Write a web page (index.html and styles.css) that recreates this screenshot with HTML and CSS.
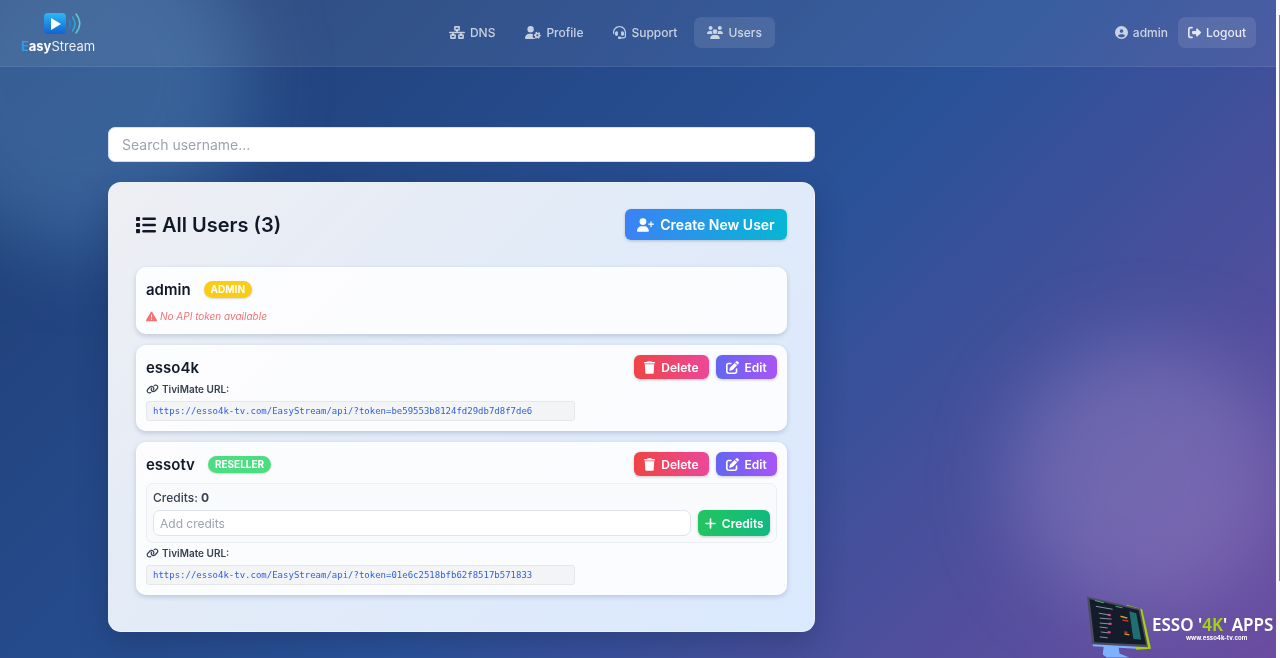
FILE: index.html
```html
<!DOCTYPE html>
<html lang="en">
<head>
    <meta charset="UTF-8">
    <meta name="viewport" content="width=device-width, initial-scale=1.0">
    <title>EasyStream - Users</title>
    <link rel="stylesheet" href="styles.css">
</head>
<body>
    <!-- icon set -->
    <svg class="sprite" aria-hidden="true">
        <symbol id="i-network" viewBox="0 0 640 512">
            <g fill="none" stroke="currentColor" stroke-width="64" stroke-linejoin="round" stroke-linecap="round">
                <rect x="236" y="32" width="168" height="124"/>
                <rect x="76" y="356" width="168" height="124"/>
                <rect x="396" y="356" width="168" height="124"/>
                <path d="M32 256H608M320 160v96M160 256v96M480 256v96"/>
            </g>
        </symbol>
        <symbol id="i-user-gear" viewBox="0 0 640 512">
            <path d="M224 0a128 128 0 1 1 0 256A128 128 0 1 1 224 0zM178.300 304h91.400c11.800 0 23.400 1.200 34.500 3.300-2.100 18.500 7.400 35.600 21.800 44.800-16.600 10.600-26.700 31.600-20 53.300 4 12.900 9.400 25.500 16.400 37.600s15.200 23.100 24.400 33c15.700 16.900 39.600 18.400 57.200 8.700v.9c0 9.200 2.700 18.500 7.900 26.300H29.700C13.300 512 0 498.700 0 482.300 0 383.800 79.800 304 178.300 304z"/>
            <circle cx="496" cy="368" r="74" fill="none" stroke="currentColor" stroke-width="64"/>
            <circle cx="496" cy="368" r="118" fill="none" stroke="currentColor" stroke-width="44" stroke-dasharray="62 61.570" stroke-dashoffset="31"/>
        </symbol>
        <symbol id="i-headset" viewBox="0 0 512 512">
            <path d="M256 48C141.100 48 48 141.100 48 256v40c0 13.300-10.700 24-24 24s-24-10.700-24-24V256C0 114.600 114.600 0 256 0S512 114.600 512 256V400.100c0 48.600-39.400 88-88.100 88L313.600 488c-8.300 14.300-23.800 24-41.600 24H240c-26.500 0-48-21.500-48-48s21.500-48 48-48h32c17.800 0 33.300 9.700 41.600 24l110.400 .1c22.100 0 40-17.900 40-40V256c0-114.900-93.100-208-208-208zM144 208h16c17.700 0 32 14.300 32 32V352c0 17.700-14.300 32-32 32H144c-35.300 0-64-28.700-64-64V272c0-35.300 28.700-64 64-64zm224 0c35.300 0 64 28.700 64 64v48c0 35.300-28.700 64-64 64H352c-17.700 0-32-14.300-32-32V240c0-17.700 14.300-32 32-32h16z"/>
        </symbol>
        <symbol id="i-users" viewBox="0 0 640 512">
            <path d="M144 0a80 80 0 1 1 0 160A80 80 0 1 1 144 0zM512 0a80 80 0 1 1 0 160A80 80 0 1 1 512 0zM0 298.700C0 239.800 47.800 192 106.700 192h42.700c15.900 0 31 3.500 44.600 9.700c-1.300 7.200-1.900 14.700-1.900 22.300c0 38.200 16.800 72.500 43.300 96c-.2 0-.4 0-.7 0H21.300C9.600 320 0 310.400 0 298.700zM405.300 320c-.2 0-.4 0-.7 0c26.600-23.500 43.300-57.800 43.300-96c0-7.600-.7-15-1.900-22.300c13.600-6.300 28.700-9.700 44.600-9.700h42.700C592.200 192 640 239.800 640 298.700c0 11.800-9.600 21.300-21.300 21.300H405.300zM224 224a96 96 0 1 1 192 0 96 96 0 1 1 -192 0zM128 485.300C128 411.700 187.700 352 261.300 352H378.700C452.300 352 512 411.700 512 485.300c0 14.700-11.900 26.700-26.700 26.700H154.700c-14.700 0-26.700-11.900-26.700-26.700z"/>
        </symbol>
        <symbol id="i-circle-user" viewBox="0 0 512 512">
            <path fill-rule="evenodd" d="M399 384.200C376.900 345.800 335.400 320 288 320H224c-47.400 0-88.900 25.800-111 64.200c35.200 39.200 86.200 63.800 143 63.800s107.800-24.700 143-63.800zM0 256a256 256 0 1 1 512 0A256 256 0 1 1 0 256zm256 16a72 72 0 1 0 0-144 72 72 0 1 0 0 144z"/>
        </symbol>
        <symbol id="i-logout" viewBox="0 0 512 512">
            <path d="M377.900 105.900L500.700 228.700c7.200 7.200 11.300 17.100 11.300 27.300s-4.100 20.100-11.300 27.300L377.900 406.100c-6.400 6.400-15 9.900-24 9.900c-18.700 0-33.900-15.200-33.900-33.900l0-62.100-128 0c-17.700 0-32-14.300-32-32l0-64c0-17.700 14.300-32 32-32l128 0 0-62.100c0-18.700 15.200-33.900 33.900-33.900c9 0 17.600 3.600 24 9.900zM160 96L96 96c-17.700 0-32 14.300-32 32l0 256c0 17.700 14.300 32 32 32l64 0c17.700 0 32 14.300 32 32s-14.300 32-32 32l-64 0c-53 0-96-43-96-96L0 128C0 75 43 32 96 32l64 0c17.700 0 32 14.300 32 32s-14.300 32-32 32z"/>
        </symbol>
        <symbol id="i-list" viewBox="0 0 512 512">
            <rect x="0" y="48" width="104" height="104" rx="24"/>
            <rect x="0" y="204" width="104" height="104" rx="24"/>
            <rect x="0" y="360" width="104" height="104" rx="24"/>
            <rect x="160" y="64" width="352" height="64" rx="32"/>
            <rect x="160" y="224" width="352" height="64" rx="32"/>
            <rect x="160" y="384" width="352" height="64" rx="32"/>
        </symbol>
        <symbol id="i-user-plus" viewBox="0 0 640 512">
            <path d="M96 128a128 128 0 1 1 256 0A128 128 0 1 1 96 128zM0 482.300C0 383.800 79.800 304 178.300 304h91.400C368.200 304 448 383.800 448 482.300c0 16.400-13.300 29.700-29.700 29.700H29.700C13.300 512 0 498.700 0 482.300zM504 312V248H440c-13.300 0-24-10.700-24-24s10.700-24 24-24h64V136c0-13.300 10.700-24 24-24s24 10.700 24 24v64h64c13.300 0 24 10.700 24 24s-10.700 24-24 24H552v64c0 13.300-10.700 24-24 24s-24-10.700-24-24z"/>
        </symbol>
        <symbol id="i-trash" viewBox="0 0 448 512">
            <path d="M135.200 17.700L128 32H32C14.300 32 0 46.300 0 64S14.300 96 32 96H416c17.700 0 32-14.300 32-32s-14.300-32-32-32H320l-7.200-14.300C307.400 6.800 296.300 0 284.200 0H163.800c-12.100 0-23.200 6.800-28.600 17.700zM416 128H32L53.200 467c1.600 25.300 22.600 45 47.900 45H346.900c25.300 0 46.300-19.700 47.900-45L416 128z"/>
        </symbol>
        <symbol id="i-edit" viewBox="0 0 512 512">
            <path d="M471.600 21.700c-21.900-21.900-57.300-21.900-79.200 0L362.300 51.700l97.900 97.900 30.100-30.100c21.900-21.900 21.900-57.300 0-79.200L471.600 21.700zm-299.200 220c-6.100 6.100-10.800 13.600-13.500 21.900l-29.600 88.800c-2.900 8.600-.6 18.100 5.800 24.600s15.900 8.700 24.600 5.800l88.800-29.600c8.200-2.700 15.700-7.400 21.900-13.500L437.700 172.300 339.700 74.300 172.400 241.700zM96 64C43 64 0 107 0 160V416c0 53 43 96 96 96H352c53 0 96-43 96-96V320c0-17.700-14.300-32-32-32s-32 14.300-32 32v96c0 17.700-14.300 32-32 32H96c-17.700 0-32-14.300-32-32V160c0-17.700 14.300-32 32-32h96c17.700 0 32-14.300 32-32s-14.300-32-32-32H96z"/>
        </symbol>
        <symbol id="i-warning" viewBox="0 0 512 512">
            <path d="M256 32c14.200 0 27.300 7.500 34.500 19.800l216 368c7.300 12.400 7.300 27.700 .2 40.100S486.300 480 472 480H40c-14.300 0-27.600-7.700-34.700-20.100s-7-27.800 .2-40.100l216-368C228.700 39.500 241.800 32 256 32zm0 128c-13.300 0-24 10.700-24 24V296c0 13.300 10.700 24 24 24s24-10.700 24-24V184c0-13.300-10.700-24-24-24zm32 224a32 32 0 1 0 -64 0 32 32 0 1 0 64 0z"/>
        </symbol>
        <symbol id="i-link" viewBox="0 0 640 512">
            <path d="M579.800 267.700c56.500-56.500 56.500-148 0-204.500c-50-50-128.800-56.500-186.300-15.400l-1.600 1.100c-14.400 10.300-17.700 30.300-7.400 44.600s30.300 17.700 44.600 7.400l1.600-1.100c32.100-22.900 76-19.300 103.800 8.600c31.500 31.500 31.500 82.500 0 114L422.300 334.800c-31.500 31.500-82.500 31.500-114 0c-27.900-27.900-31.500-71.800-8.600-103.800l1.100-1.600c10.300-14.400 6.900-34.400-7.400-44.600s-34.400-6.900-44.600 7.400l-1.100 1.600C206.500 251.200 213 330 263 380c56.500 56.500 148 56.500 204.500 0L579.800 267.700zM60.200 244.300c-56.500 56.500-56.500 148 0 204.500c50 50 128.800 56.500 186.300 15.400l1.600-1.100c14.400-10.300 17.700-30.300 7.400-44.600s-30.300-17.700-44.600-7.400l-1.600 1.100c-32.100 22.900-76 19.300-103.800-8.600C74 372 74 321 105.500 289.500L217.700 177.200c31.500-31.500 82.500-31.500 114 0c27.900 27.900 31.500 71.800 8.600 103.900l-1.100 1.600c-10.300 14.400-6.900 34.400 7.400 44.600s34.400 6.900 44.600-7.400l1.100-1.600C433.500 260.800 427 182 377 132c-56.500-56.500-148-56.500-204.500 0L60.200 244.300z"/>
        </symbol>
        <symbol id="i-plus" viewBox="0 0 448 512">
            <path d="M224 80V432M48 256H400" fill="none" stroke="currentColor" stroke-width="64" stroke-linecap="round"/>
        </symbol>
    </svg>

    <div class="backdrop">
        <div class="blob blob-left"></div>
        <div class="blob blob-right"></div>
    </div>

    <nav class="navbar">
        <a href="#" class="logo">
            <svg class="logo-mark" viewBox="0 0 38 22" aria-hidden="true">
                <defs>
                    <linearGradient id="logoBlue" x1="0" y1="0" x2="0" y2="1">
                        <stop offset="0" stop-color="#2bb8f5"/>
                        <stop offset="1" stop-color="#1263d2"/>
                    </linearGradient>
                </defs>
                <rect x="0" y="0" width="22" height="21" rx="4" fill="url(#logoBlue)"/>
                <path d="M7 5v12l10-6z" fill="#fff"/>
                <g fill="none" stroke-width="1.500" stroke-linecap="round">
                    <path d="M25 7q3 4 0 8" stroke="#2387d8"/>
                    <path d="M28.500 4q5 7 0 14" stroke="#36a3d8"/>
                    <path d="M32 1q7.500 9.500 0 19" stroke="#5fc9cf"/>
                </g>
            </svg>
            <span class="logo-text"><b><span class="logo-e">E</span>asy</b>Stream</span>
        </a>
        <div class="menu">
            <a href="#" class="nav-link"><svg class="icon wide"><use href="#i-network"/></svg>DNS</a>
            <a href="#" class="nav-link"><svg class="icon wide"><use href="#i-user-gear"/></svg>Profile</a>
            <a href="#" class="nav-link"><svg class="icon"><use href="#i-headset"/></svg>Support</a>
            <a href="#" class="nav-link active"><svg class="icon wide"><use href="#i-users"/></svg>Users</a>
        </div>
        <div class="account">
            <span class="account-name"><svg class="icon"><use href="#i-circle-user"/></svg>admin</span>
            <a href="#" class="logout"><svg class="icon"><use href="#i-logout"/></svg>Logout</a>
        </div>
    </nav>

    <main class="container">
        <div class="content">
            <input type="text" class="search" placeholder="Search username..." aria-label="Search username">

            <section class="panel">
                <div class="panel-header">
                    <h2><svg class="icon"><use href="#i-list"/></svg>All Users (3)</h2>
                    <button type="button" class="btn btn-create"><svg class="icon wide"><use href="#i-user-plus"/></svg>Create New User</button>
                </div>

                <div class="user-list">
                    <div class="user-card">
                        <div class="user-top">
                            <h3>admin</h3>
                            <span class="badge badge-admin">ADMIN</span>
                        </div>
                        <p class="no-token"><svg class="icon"><use href="#i-warning"/></svg>No API token available</p>
                    </div>

                    <div class="user-card">
                        <div class="user-top">
                            <h3>esso4k</h3>
                            <div class="actions">
                                <button type="button" class="btn btn-delete"><svg class="icon"><use href="#i-trash"/></svg>Delete</button>
                                <button type="button" class="btn btn-edit"><svg class="icon"><use href="#i-edit"/></svg>Edit</button>
                            </div>
                        </div>
                        <p class="url-label"><svg class="icon"><use href="#i-link"/></svg>TiviMate URL:</p>
                        <code class="url">https://esso4k-tv.com/EasyStream/api/?token=be59553b8124fd29db7d8f7de6</code>
                    </div>

                    <div class="user-card">
                        <div class="user-top">
                            <h3>essotv</h3>
                            <span class="badge badge-reseller">RESELLER</span>
                            <div class="actions">
                                <button type="button" class="btn btn-delete"><svg class="icon"><use href="#i-trash"/></svg>Delete</button>
                                <button type="button" class="btn btn-edit"><svg class="icon"><use href="#i-edit"/></svg>Edit</button>
                            </div>
                        </div>
                        <form class="credits">
                            <label for="credits">Credits: <b>0</b></label>
                            <div class="credits-row">
                                <input type="text" id="credits" placeholder="Add credits">
                                <button type="button" class="btn btn-credits"><svg class="icon"><use href="#i-plus"/></svg>Credits</button>
                            </div>
                        </form>
                        <p class="url-label"><svg class="icon"><use href="#i-link"/></svg>TiviMate URL:</p>
                        <code class="url">https://esso4k-tv.com/EasyStream/api/?token=01e6c2518bfb62f8517b571833</code>
                    </div>
                </div>
            </section>
        </div>
    </main>

    <div class="watermark">
        <svg class="monitor" viewBox="0 0 66 62" aria-hidden="true">
            <path d="M17 50h15l1 8 10 4H20l-4-3z" fill="#7eb2ff"/>
            <path d="M4 37L6 50.500 50 53V48z" fill="#7eb2ff"/>
            <path d="M40 8.500L56 13 65 53 50 54z" fill="#a8cf10"/>
            <path d="M0 0L54 12.500 62 51.500 5 48.500z" fill="#4d4d63"/>
            <path d="M2.500 2.500L52.500 14 60 49 7.500 46.500z" fill="#151c29"/>
            <path d="M43 15l7 2 5 27-8-1z" fill="#1f6e70"/>
            <path d="M8 4l9 2.500M29 10l7 1.500" stroke="#4fae7d" stroke-width="1"/>
            <g stroke="#8a93a5" stroke-width="1">
                <path d="M9 10l17 3M12 17l12 2M13 22l12 1M13 27l11 1M13 31l8 1M14 36l8 1M13 41l8 1"/>
            </g>
            <path d="M21 18.500l3 .5M22 27.500l3 .5M21 36l3 .5" stroke="#e0459b" stroke-width="2"/>
            <path d="M34 20l7 2M38 38l5 1" stroke="#d8a23a" stroke-width="1.500"/>
            <path d="M36 24l6 1M38 36l3 .5" stroke="#c63838" stroke-width="1.500"/>
        </svg>
        <div class="watermark-text">
            <span class="watermark-title">ESSO '<span class="lime">4K</span>' APPS</span>
            <span class="watermark-url">www.esso4k-tv.com</span>
        </div>
    </div>

    <div class="scrollbar"><div class="thumb"></div></div>
</body>
</html>
```

FILE: styles.css
```css
* {
    box-sizing: border-box;
    margin: 0;
    padding: 0;
}

body {
    min-height: 100vh;
    padding-right: 4px;
    font-family: Inter, "Liberation Sans", sans-serif;
    color: #111827;
}

a {
    text-decoration: none;
}

.sprite {
    position: absolute;
    width: 0;
    height: 0;
}

.icon {
    width: 13px;
    height: 13px;
    fill: currentColor;
    flex-shrink: 0;
}

.icon.wide {
    width: 16px;
}

/* background */
.backdrop {
    position: fixed;
    top: 0;
    left: 0;
    z-index: -1;
    width: 100%;
    height: 122vh;
    overflow: hidden;
    background: linear-gradient(135deg, #1e3c72 0%, #2a5298 50%, #764ba2 100%);
}

.blob {
    position: absolute;
    border-radius: 50%;
    filter: blur(40px);
}

.blob-left {
    top: -90px;
    left: -90px;
    width: 340px;
    height: 340px;
    background: rgba(104, 160, 212, 0.34);
}

.blob-right {
    top: 52vh;
    right: 0;
    width: 270px;
    height: 270px;
    background: rgba(178, 155, 215, 0.32);
}

/* navbar */
.navbar {
    display: flex;
    align-items: center;
    justify-content: space-between;
    height: 67px;
    padding: 0 20px 1px;
    background: rgba(255, 255, 255, 0.07);
    border-bottom: 1px solid rgba(255, 255, 255, 0.08);
}

.logo {
    display: flex;
    flex-direction: column;
    align-items: center;
    width: 76px;
    padding-top: 5px;
    color: #e8eefa;
}

.logo-mark {
    width: 38px;
    height: 22px;
    margin-left: 10px;
}

.logo-text {
    font-size: 13px;
    line-height: 22px;
}

.logo-text b {
    font-weight: 700;
    color: #fff;
}

.logo-text .logo-e {
    color: #2b9dea;
}

.menu {
    display: flex;
    gap: 4px;
}

.nav-link,
.account-name,
.logout {
    display: flex;
    align-items: center;
    gap: 5px;
    height: 31px;
    font-size: 12px;
    font-weight: 500;
    color: rgba(255, 255, 255, 0.72);
}

.nav-link {
    padding: 0 13px;
    border-radius: 7px;
}

.nav-link.active {
    background: rgba(255, 255, 255, 0.1);
}

.account {
    display: flex;
    gap: 10px;
}

.logout {
    padding: 0 10px;
    border-radius: 7px;
    background: rgba(255, 255, 255, 0.1);
    color: rgba(255, 255, 255, 0.85);
}

/* content */
.container {
    display: grid;
    grid-template-columns: 2fr 1fr;
    max-width: 1060px;
    margin: 0 auto;
    padding: 60px 0 20px;
}

.search {
    display: block;
    width: 100%;
    height: 35px;
    padding: 0 13px;
    border: 1px solid #d5e1f3;
    border-radius: 7px;
    background: #fff;
    font-family: inherit;
    font-size: 14px;
}

input::placeholder {
    color: #9ca3af;
}

.panel {
    margin-top: 20px;
    padding: 26px 27px 36px;
    border: 1px solid rgba(255, 255, 255, 0.3);
    border-radius: 13px;
    background: linear-gradient(135deg, #eeeff3 0%, #e3ebf7 40%, #dae9fe 100%);
    box-shadow: 0 10px 30px rgba(20, 30, 70, 0.3);
}

.panel-header {
    display: flex;
    align-items: center;
    justify-content: space-between;
    margin-bottom: 27px;
}

.panel-header h2 {
    display: flex;
    align-items: center;
    gap: 6px;
    font-size: 20px;
    font-weight: 600;
    line-height: 30px;
}

.panel-header h2 .icon {
    width: 20px;
    height: 20px;
}

.btn {
    display: flex;
    align-items: center;
    border: none;
    border-radius: 6px;
    color: #fff;
    font-family: inherit;
    font-size: 12px;
    font-weight: 600;
    cursor: pointer;
    box-shadow: 0 1px 3px rgba(0, 0, 0, 0.2);
}

.btn-create {
    gap: 6px;
    height: 31px;
    padding: 0 12px;
    font-size: 14px;
    background: linear-gradient(90deg, #3b82f6, #06b6d4);
}

.btn-create .icon.wide {
    width: 17px;
    height: 14px;
}

.user-list {
    display: flex;
    flex-direction: column;
    gap: 11px;
}

.user-card {
    padding: 9px;
    border: 1px solid rgba(255, 255, 255, 0.5);
    border-radius: 10px;
    background: rgba(255, 255, 255, 0.85);
    box-shadow: 0 2px 5px rgba(30, 60, 100, 0.2);
}

.user-top {
    display: flex;
    align-items: center;
    gap: 13px;
    height: 24px;
}

.user-top h3 {
    font-size: 15px;
    font-weight: 600;
}

.badge {
    height: 17px;
    padding: 0 7px;
    border-radius: 9px;
    color: #fff;
    font-size: 10px;
    font-weight: 700;
    line-height: 17px;
    box-shadow: 0 1px 2px rgba(0, 0, 0, 0.15);
}

.badge-admin {
    background: #facc15;
}

.badge-reseller {
    background: #4ade80;
}

.actions {
    display: flex;
    gap: 7px;
    margin-left: auto;
}

.btn-delete,
.btn-edit {
    gap: 6px;
    height: 24px;
    padding: 0 10px;
}

.btn-delete {
    background: linear-gradient(90deg, #ef4444, #ec4899);
}

.btn-edit {
    background: linear-gradient(90deg, #6366f1, #a855f7);
}

.btn-delete .icon {
    width: 11px;
}

.no-token,
.url-label {
    display: flex;
    align-items: center;
    gap: 3px;
    font-size: 10px;
    line-height: 16px;
}

.no-token {
    margin-top: 7px;
    color: #f87171;
    font-style: italic;
}

.no-token .icon {
    width: 11px;
    height: 11px;
}

.url-label {
    margin: 2px 0 4px;
    color: #374151;
    font-weight: 600;
}

.url-label .icon {
    width: 13px;
    height: 10px;
}

.url {
    display: block;
    width: 68%;
    height: 20px;
    padding: 0 6px;
    overflow: hidden;
    border: 1px solid #e5e7eb;
    border-radius: 3px;
    background: #f3f4f6;
    color: #2f5fe0;
    font-family: "DejaVu Sans Mono", monospace;
    font-size: 9px;
    line-height: 18px;
    white-space: nowrap;
}

.credits {
    margin-top: 7px;
    padding: 6px;
    border: 1px solid #eceef2;
    border-radius: 7px;
    background: #f9fafb;
}

.credits label {
    display: block;
    margin-bottom: 4px;
    color: #374151;
    font-size: 12px;
    font-weight: 500;
    line-height: 16px;
}

.credits-row {
    display: flex;
    gap: 7px;
}

.credits-row input {
    flex: 1;
    min-width: 0;
    height: 26px;
    padding: 0 6px;
    border: 1px solid #dfe3ea;
    border-radius: 7px;
    background: #fff;
    font-family: inherit;
    font-size: 12px;
}

.btn-credits {
    gap: 5px;
    height: 26px;
    padding: 0 6px;
    background: linear-gradient(90deg, #22c55e, #10b981);
}

/* corner branding */
.watermark {
    position: fixed;
    right: 4px;
    bottom: 0;
    display: flex;
    width: 189px;
    overflow: hidden;
    color: #fff;
    white-space: nowrap;
}

.monitor {
    width: 65px;
    height: 62px;
    flex-shrink: 0;
}

.watermark-text {
    display: flex;
    flex-direction: column;
    padding-top: 17px;
}

.watermark-title {
    font-family: "Noto Sans", sans-serif;
    font-size: 17px;
    font-weight: 600;
    line-height: 24px;
}

.watermark-url {
    margin-left: 34px;
    font-size: 6px;
    font-weight: 700;
    line-height: 8px;
    margin-top: -3px;
}

.lime {
    color: #a3d80c;
}

.scrollbar {
    position: fixed;
    top: 0;
    right: 0;
    width: 4px;
    height: 100%;
    padding: 15px 0 0 3px;
    background: #fafafa;
}

.thumb {
    height: 88%;
    background: #8b8b8b;
}
```
